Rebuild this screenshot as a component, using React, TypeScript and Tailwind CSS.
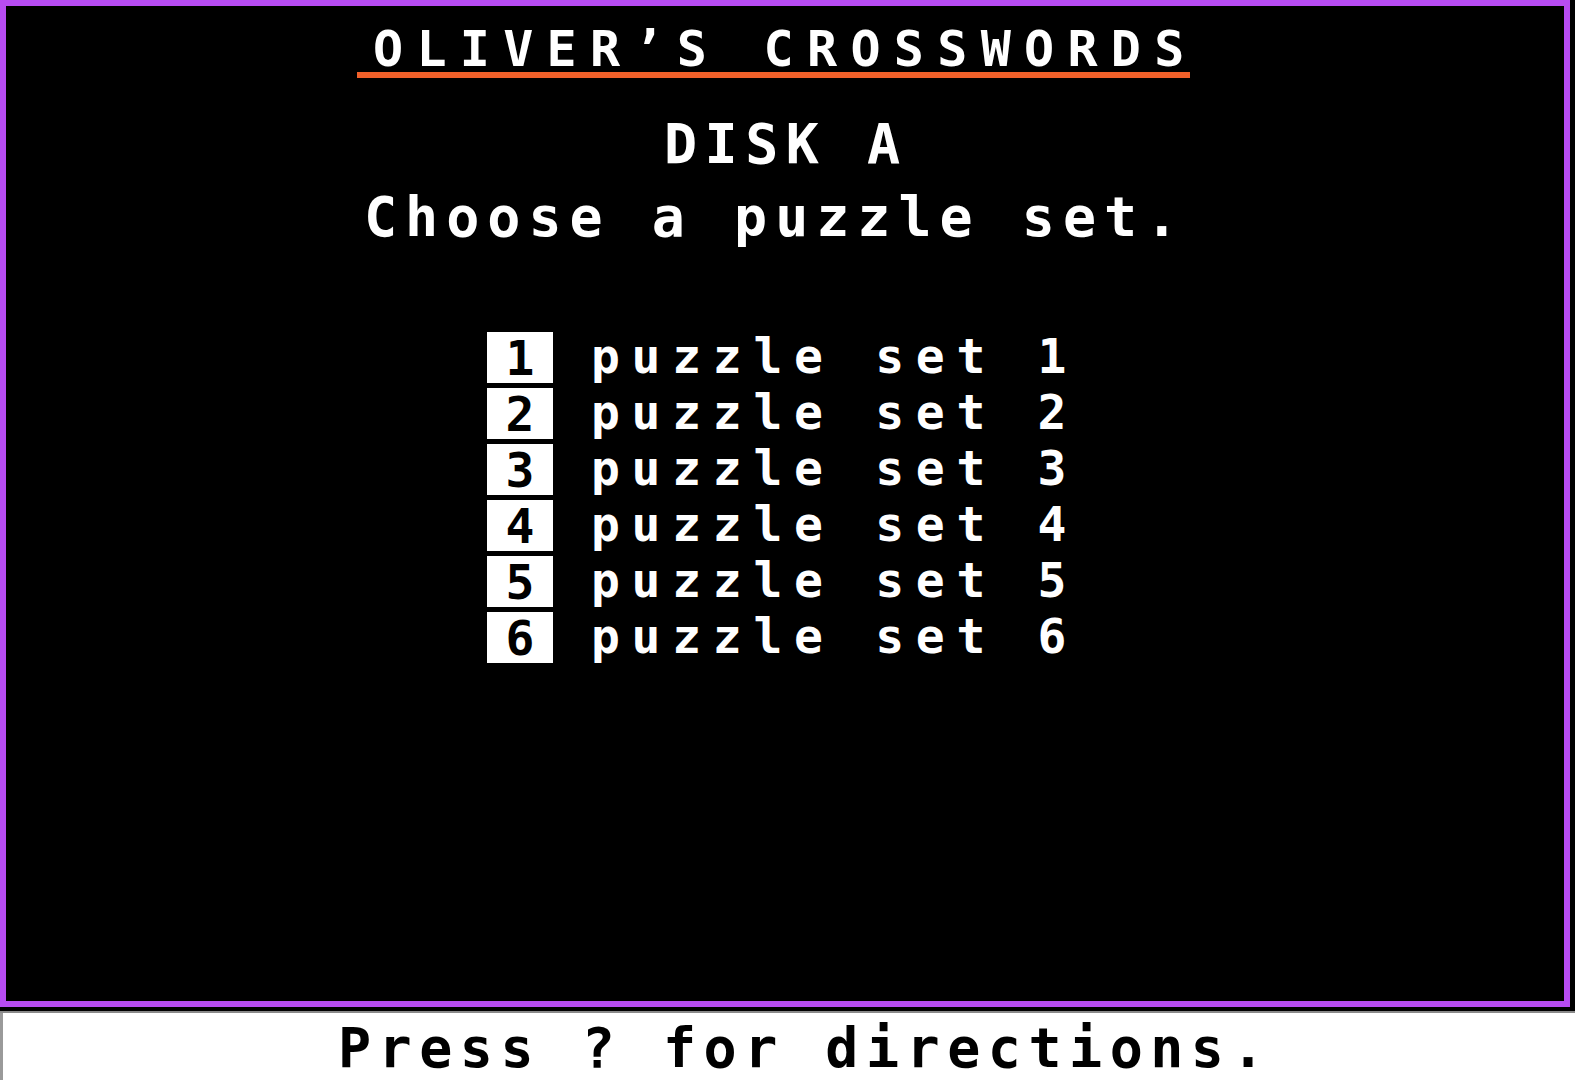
import React from "react";

const mono = { fontFamily: '"DejaVu Sans Mono", "Liberation Mono", monospace' };

function Row({ n }: { n: number }) {
  return (
    <div className="flex items-start h-[56px]">
      <div className="ml-[481px] mt-[6px] w-[66px] h-[51px] bg-white flex items-center justify-center">
        <span className="text-black font-bold text-[48px] leading-[48px]" style={mono}>
          {n}
        </span>
      </div>
      <span
        className="ml-[38px] mt-[6px] text-white font-bold text-[48px] leading-[48px] tracking-[11.7px] whitespace-pre"
        style={mono}
      >
        {`puzzle set ${n}`}
      </span>
    </div>
  );
}

export default function App() {
  return (
    <div className="w-[1575px] h-[1080px] bg-black flex flex-col overflow-hidden" style={mono}>
      <div className="w-[1570px] h-[1007px] border-[6px] border-[#b84cf2] bg-black flex flex-col items-start">
        <span
          className="ml-[367px] mt-[20px] text-white font-bold text-[50px] leading-[46px] tracking-[13.3px] whitespace-pre"
          style={mono}
        >
          OLIVER’S CROSSWORDS
        </span>
        <div className="ml-[351px] w-[833px] h-[6px] bg-[#f0602a]" />
        <span
          className="ml-[658px] mt-[39px] text-white font-bold text-[55px] leading-[55px] tracking-[7.5px] whitespace-pre"
          style={mono}
        >
          DISK A
        </span>
        <span
          className="ml-[358px] mt-[18px] text-white font-bold text-[55px] leading-[55px] tracking-[8px] whitespace-pre"
          style={mono}
        >
          Choose a puzzle set.
        </span>
        <div className="mt-[81px] flex flex-col">
          {[1, 2, 3, 4, 5, 6].map((n) => (
            <Row key={n} n={n} />
          ))}
        </div>
      </div>
      <div className="h-[4px] bg-black" />
      <div className="h-[2px] bg-[#8a8a8a]" />
      <div className="flex-1 bg-white border-l-[3px] border-[#9a9a9a] flex items-start">
        <span
          className="ml-[335px] mt-[8px] text-black font-bold text-[55px] leading-[55px] tracking-[7.5px] whitespace-pre"
          style={mono}
        >
          Press ? for directions.
        </span>
      </div>
    </div>
  );
}
